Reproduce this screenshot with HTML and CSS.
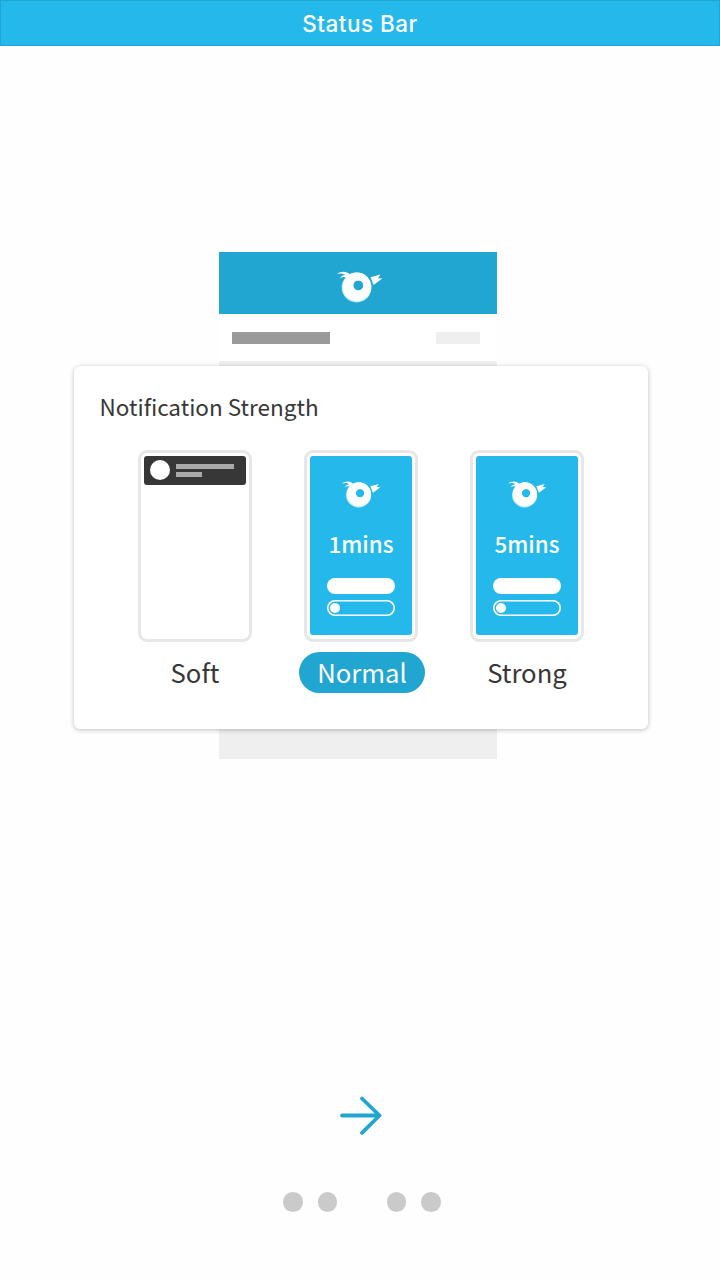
FILE: index.html
```html
<!DOCTYPE html>
<html lang="en">
<head>
<meta charset="utf-8">
<title>Notification Strength</title>
<link rel="stylesheet" href="styles.css">
</head>
<body>
<svg class="defs" width="0" height="0" aria-hidden="true">
  <symbol id="bird" viewBox="0 0 46 32">
    <path fill="#c8edf9" fill-rule="evenodd" d="M19.600 1.600a14.900 14.900 0 1 1 0 29.800a14.900 14.900 0 1 1 0-29.800ZM21.300 9.400a5 5 0 1 0 0 10a5 5 0 1 0 0-10Z"/>
    <path fill="#fff" fill-rule="evenodd" d="M20 1.600a14.200 14.200 0 1 1 0 28.400a14.200 14.200 0 1 1 0-28.400ZM21.300 9.400a5 5 0 1 0 0 10a5 5 0 1 0 0-10Z"/>
    <path fill="#fff" d="M0 3C4-.100 9.500-.300 13 3.600L9.500 6.700C7 5.700 4.800 6 3 7.400C4.300 4.700 6.500 3.900 8.700 4.100C5.800 2.100 3 2.100 0 3Z"/>
    <path fill="#fff" d="M33.500 6.300L43.400 3.500L41 7.200L45.300 7.400L36.600 14Z"/>
  </symbol>
</svg>
<header class="status">Status Bar</header>
<main class="stage">
  <section class="app">
    <div class="app-head"><svg class="logo"><use href="#bird"/></svg></div>
    <div class="app-row"><i class="bar-dark"></i><i class="bar-light"></i></div>
    <div class="app-body"></div>
  </section>
  <section class="card">
    <h1 class="title">Notification Strength</h1>
    <div class="options">
      <div class="option">
        <div class="phone">
          <div class="toast"><i class="avatar"></i><div class="lines"><i class="line"></i><i class="line short"></i></div></div>
        </div>
        <span class="label">Soft</span>
      </div>
      <div class="option">
        <div class="phone">
          <div class="screen"><svg class="logo-small"><use href="#bird"/></svg><span class="mins">1mins</span><i class="pill"></i><i class="slider"></i></div>
        </div>
        <span class="label selected">Normal</span>
      </div>
      <div class="option">
        <div class="phone">
          <div class="screen"><svg class="logo-small"><use href="#bird"/></svg><span class="mins">5mins</span><i class="pill"></i><i class="slider"></i></div>
        </div>
        <span class="label">Strong</span>
      </div>
    </div>
  </section>
</main>
<footer class="footer">
  <svg class="arrow" viewBox="0 0 44 40"><path d="M3 19.500H40.500M23 2.500L40.500 19.500L23 36.800" fill="none" stroke="#21a6d1" stroke-width="3.800" stroke-linecap="round" stroke-linejoin="round"/></svg>
  <nav class="dots"><i class="dot"></i><i class="dot"></i><i class="dot current"></i><i class="dot"></i><i class="dot"></i></nav>
</footer>
</body>
</html>
```
FILE: styles.css
```css
* { box-sizing: border-box; }
body {
  margin: 0;
  width: 720px;
  height: 1280px;
  display: flex;
  flex-direction: column;
  background: #fefefe;
  color: #373737;
  font-family: "Noto Sans CJK SC", "Noto Sans", sans-serif;
}
i { display: block; }
.defs { position: absolute; }
.status {
  height: 46px;
  border: 1px solid #21a6d1;
  background: #25b9eb;
  color: #fff;
  font-family: Inter, "Liberation Sans", sans-serif;
  font-size: 22.500px;
  font-weight: 500;
  line-height: 45px;
  letter-spacing: .5px;
  text-align: center;
}
.stage {
  display: grid;
  grid-template-columns: 720px;
  height: 1034px;
  align-items: start;
}
.app {
  grid-area: 1 / 1;
  width: 278px;
  margin: 206.400px 0 0 219px;
  background: #fff;
}
.app-head { height: 61.600px; padding: 19px 0 0 117.500px; background: #21a6d1; }
.logo { display: block; width: 46px; height: 32px; }
.app-row {
  height: 47px;
  display: flex;
  justify-content: space-between;
  padding: 18px 17px 0 13.300px;
}
.bar-dark { width: 97.700px; height: 12px; background: #9a9a9a; }
.bar-light { width: 44px; height: 12px; background: #efefef; }
.app-body { height: 398px; background: #efefef; }
.card {
  grid-area: 1 / 1;
  width: 574px;
  height: 363.500px;
  margin: 319.700px 0 0 74px;
  padding: 23px 0 0 26px;
  background: #fff;
  border-radius: 6px;
  box-shadow: 0 1px 5px rgba(0, 0, 0, .26);
  z-index: 1;
}
.title { margin: 0 0 0 -.5px; font-size: 22.500px; line-height: 34px; font-weight: 400; }
.options { display: flex; gap: 40px; margin: 27px 0 0 32px; }
.option { width: 126px; display: flex; flex-direction: column; align-items: center; }
.phone {
  width: 114.500px;
  height: 192px;
  padding: 3.300px;
  border: 3px solid #e7e7e7;
  border-radius: 9px;
  background: #fff;
}
.toast {
  height: 29px;
  padding: 0 6px;
  display: flex;
  align-items: center;
  gap: 6px;
  border-radius: 3px;
  background: #373737;
}
.avatar { width: 20px; height: 20px; border-radius: 50%; background: #fff; }
.lines { display: grid; gap: 3px; }
.line { width: 58px; height: 5px; background: #a9a9a9; }
.short { width: 26px; }
.screen {
  height: 179px;
  display: flex;
  flex-direction: column;
  align-items: center;
  padding-top: 25px;
  border-radius: 3px;
  background: #25b9eb;
  color: #fff;
}
.logo-small { width: 39px; height: 27px; }
.mins { height: 36px; margin-top: 18px; font-size: 22.400px; line-height: 35px; font-weight: 500; }
.pill { width: 67.500px; height: 16px; margin-top: 15.700px; border-radius: 8px; background: #fff; }
.slider { width: 67.500px; height: 16px; margin-top: 6.500px; padding: 3px; border-radius: 8px; box-shadow: inset 0 0 0 1.600px #fff; }
.slider::before { content: ""; display: block; width: 10px; height: 10px; border-radius: 50%; background: #fff; }
.label { height: 41px; margin-top: 10px; font-size: 25.700px; line-height: 40px; }
.selected { width: 126px; margin-left: 2px; border-radius: 21px; background: #21a6d1; color: #fff; text-align: center; }
.footer { flex: 1; display: flex; flex-direction: column; align-items: center; }
.arrow { width: 44px; height: 40px; margin: 15.500px 0 0 1px; }
.dots { display: flex; gap: 15px; margin: 56.500px 0 0 4px; }
.dot { width: 19.600px; height: 19.600px; border-radius: 50%; background: #cacaca; }
.current { background: transparent; }
```
